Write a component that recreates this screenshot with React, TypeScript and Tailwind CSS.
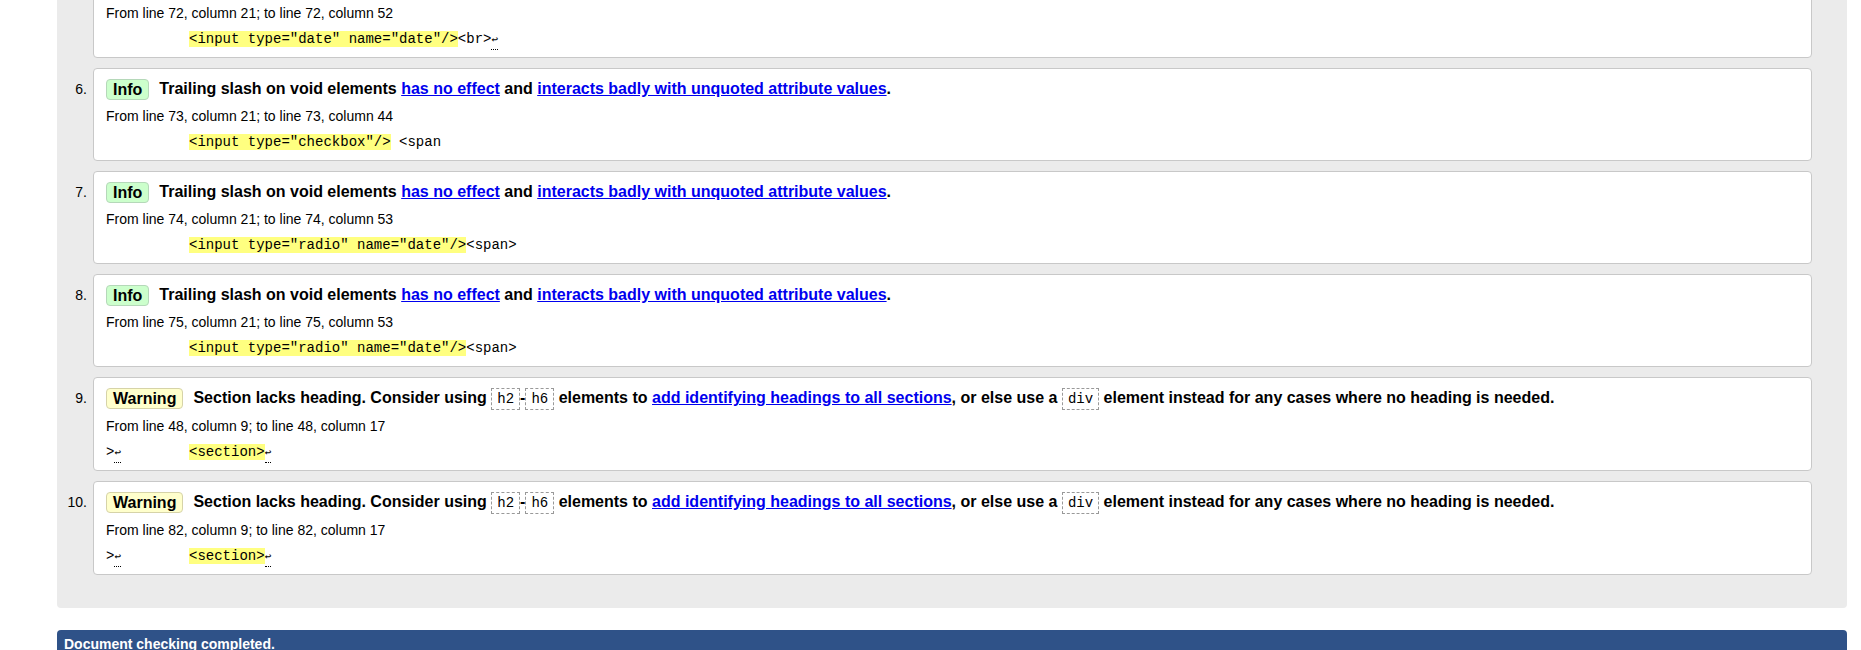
import React from 'react';

const sans = "font-['Liberation_Sans',Arial,sans-serif]";
const mono = "font-['Liberation_Mono','Courier_New',monospace]";

function Ret() {
  return (
    <span className="relative inline-block text-[11px] leading-none">
      ↩
      <span className="absolute left-0 right-0 -bottom-[4px] border-b border-dotted border-black" />
    </span>
  );
}

function Code({ children }: { children: React.ReactNode }) {
  return (
    <code className={`${mono} inline-flex items-center h-[22px] px-[5px] border border-dashed border-[#999] text-[14px] font-normal align-middle`}>
      {children}
    </code>
  );
}

function Link({ children }: { children: React.ReactNode }) {
  return <a href="#" className="text-[#0000ee] underline">{children}</a>;
}

type Msg = {
  n: number;
  kind: 'info' | 'warning';
  from: string;
  prefix?: React.ReactNode;
  code: string;
  after?: React.ReactNode;
};

const messages: Msg[] = [
  { n: 5, kind: 'info', from: 'From line 72, column 21; to line 72, column 52', code: '<input type="date" name="date"/>', after: <>{'<br>'}<Ret /></> },
  { n: 6, kind: 'info', from: 'From line 73, column 21; to line 73, column 44', code: '<input type="checkbox"/>', after: ' <span' },
  { n: 7, kind: 'info', from: 'From line 74, column 21; to line 74, column 53', code: '<input type="radio" name="date"/>', after: '<span>' },
  { n: 8, kind: 'info', from: 'From line 75, column 21; to line 75, column 53', code: '<input type="radio" name="date"/>', after: '<span>' },
  { n: 9, kind: 'warning', from: 'From line 48, column 9; to line 48, column 17', prefix: <>{'>'}<Ret /></>, code: '<section>', after: <Ret /> },
  { n: 10, kind: 'warning', from: 'From line 82, column 9; to line 82, column 17', prefix: <>{'>'}<Ret /></>, code: '<section>', after: <Ret /> },
];

function Title({ kind }: { kind: Msg['kind'] }) {
  if (kind === 'info') {
    return (
      <span>
        Trailing slash on void elements <Link>has no effect</Link> and{' '}
        <Link>interacts badly with unquoted attribute values</Link>.
      </span>
    );
  }
  return (
    <span>
      Section lacks heading. Consider using <Code>h2</Code>-<Code>h6</Code> elements to{' '}
      <Link>add identifying headings to all sections</Link>, or else use a <Code>div</Code> element
      instead for any cases where no heading is needed.
    </span>
  );
}

function Message({ m }: { m: Msg }) {
  const badge =
    m.kind === 'info'
      ? 'bg-[#ccffcc] border-[#b5d8b9]'
      : 'bg-[#ffffcc] border-[#d6d3a8]';
  return (
    <div className="flex items-start">
      <div className="w-[36px] shrink-0 pt-[10px] pr-[6px] text-right text-[14px] leading-[22px] text-black">
        {m.n}.
      </div>
      <div className="flex-1 bg-white border border-[#c8c8c8] rounded-[4px] px-[12px] pt-[9px] pb-[9px]">
        <div className="flex items-center min-h-[22px] text-[16px] font-bold leading-[22px] text-black">
          <span className={`shrink-0 h-[21px] px-[6px] border rounded-[4px] leading-[19px] mr-[10px] ${badge}`}>
            {m.kind === 'info' ? 'Info' : 'Warning'}
          </span>
          <Title kind={m.kind} />
        </div>
        <div className="mt-[6px] text-[14px] leading-[20px] text-black">{m.from}</div>
        <div className={`${mono} mt-[7px] flex items-center text-[14px] leading-[18px] text-black whitespace-pre`}>
          <span className="w-[83px] shrink-0">{m.prefix}</span>
          <span className="bg-[#ffff80] leading-[16px]">{m.code}</span>
          <span>{m.after}</span>
        </div>
      </div>
    </div>
  );
}

export default function App() {
  return (
    <div className={`${sans} min-h-screen bg-white overflow-hidden`}>
      <div className="-mt-[45px] ml-[57px] mr-[14px] bg-[#ebebeb] rounded-b-[4px] pt-[10px] pb-[33px] pr-[35px]">
        <div className="flex flex-col gap-[10px]">
          {messages.map((m) => (
            <Message key={m.n} m={m} />
          ))}
        </div>
      </div>
      <div className="mt-[22px] ml-[57px] mr-[14px] h-[60px] bg-[#2f5288] rounded-t-[4px] pl-[7px] pt-[5px] text-[14px] font-bold leading-[18px] text-white">
        Document checking completed.
      </div>
    </div>
  );
}
